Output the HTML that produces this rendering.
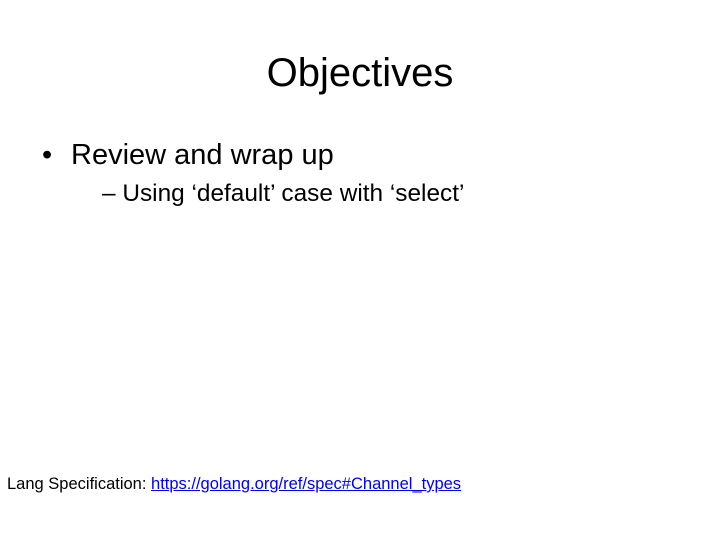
<!DOCTYPE html>
<html><head><meta charset="utf-8"><style>
body{margin:0;width:720px;height:540px;background:#fff;position:relative;overflow:hidden;font-family:"Liberation Sans",sans-serif;color:#000}
div{position:absolute;white-space:nowrap;line-height:1}
a{color:#0000ee;text-decoration:underline}
</style></head><body>
<div style="left:0;width:720px;text-align:center;top:53px;font-size:40px">Objectives</div>
<div style="left:42px;top:141px;font-size:29px">•</div>
<div style="left:71px;top:141px;font-size:29px">Review and wrap up</div>
<div style="left:102px;top:182px;font-size:24.4px">– Using ‘default’ case with ‘select’</div>
<div style="left:7px;top:476px;font-size:16.5px">Lang Specification: <a>https://golang.org/ref/spec#Channel_types</a></div>
</body></html>
